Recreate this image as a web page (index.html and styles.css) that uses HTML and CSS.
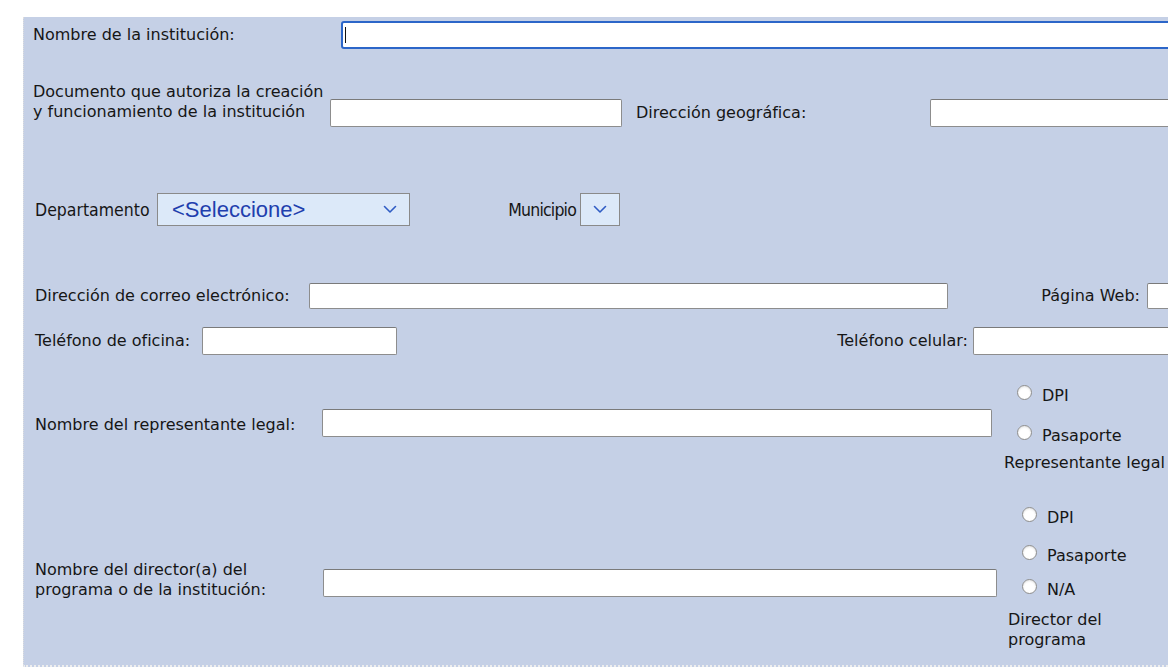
FILE: index.html
```html
<!DOCTYPE html>
<html lang="es">
<head>
<meta charset="utf-8">
<title>Institución</title>
<link rel="stylesheet" href="styles.css">
</head>
<body>
<div class="page">
  <form class="panel">
    <div class="row r1">
      <label class="lbl w308">Nombre de la institución:</label>
      <span class="focus-wrap"><input class="field focused w1000" type="text"></span>
    </div>

    <div class="row r2">
      <label class="lbl two w297">Documento que autoriza la creación<br>y funcionamiento de la institución</label>
      <input class="field w292" type="text">
      <label class="lbl w294 ml14 pb4">Dirección geográfica:</label>
      <input class="field w400" type="text">
    </div>

    <div class="row r3">
      <label class="lbl cond w122 ml2">Departamento</label>
      <span class="sel-wrap">
        <select class="sel w253"><option>&lt;Seleccione&gt;</option></select>
        <svg class="chev" width="14" height="9" viewBox="0 0 14 9"><path d="M1.5 1.5 L7 7 L12.5 1.5" fill="none" stroke="#2f5cc4" stroke-width="1.6" stroke-linecap="round" stroke-linejoin="round"/></svg>
      </span>
      <label class="lbl cond tight right w170">Municipio</label>
      <span class="sel-wrap">
        <select class="sel w40"><option></option></select>
        <svg class="chev" width="14" height="9" viewBox="0 0 14 9"><path d="M1.5 1.5 L7 7 L12.5 1.5" fill="none" stroke="#2f5cc4" stroke-width="1.6" stroke-linecap="round" stroke-linejoin="round"/></svg>
      </span>
    </div>

    <div class="row r4">
      <label class="lbl w274 ml2">Dirección de correo electrónico:</label>
      <input class="field w639 h26" type="text">
      <label class="lbl right w199">Página Web:</label>
      <input class="field w300 h26" type="text">
    </div>

    <div class="row r5">
      <label class="lbl w167 ml2">Teléfono de oficina:</label>
      <input class="field w195" type="text">
      <label class="lbl right w576 pr5">Teléfono celular:</label>
      <input class="field w300" type="text">
    </div>

    <div class="row r6">
      <label class="lbl w287 ml2 mt34">Nombre del representante legal:</label>
      <input class="field w670 mt28" type="text">
      <div class="opts g6">
        <label class="opt"><input type="radio" name="rep" class="radio"><span>DPI</span></label>
        <label class="opt o2"><input type="radio" name="rep" class="radio"><span>Pasaporte</span></label>
        <div class="cap c6">Representante legal</div>
      </div>
    </div>

    <div class="row r7">
      <label class="lbl two w288 ml2 mt56">Nombre del director(a) del<br>programa o de la institución:</label>
      <input class="field w674 mt65" type="text">
      <div class="opts g7">
        <label class="opt"><input type="radio" name="dir" class="radio"><span>DPI</span></label>
        <label class="opt o7b"><input type="radio" name="dir" class="radio"><span>Pasaporte</span></label>
        <label class="opt o7c"><input type="radio" name="dir" class="radio"><span>N/A</span></label>
        <div class="cap c7">Director del<br>programa</div>
      </div>
    </div>
  </form>
</div>
</body>
</html>
```
FILE: styles.css
```css
html, body {
  margin: 0;
  padding: 0;
  background: #ffffff;
  overflow: hidden;
}
.page {
  padding: 17px 0 0 23px;
}
.panel {
  width: 1400px;
  background: #c5d0e6;
  border-left: 1px dotted #dedede;
  border-bottom: 2px dotted #eeeeee;
  padding: 0 0 15px 9px;
  display: flex;
  flex-direction: column;
  font-family: "DejaVu Sans", Verdana, sans-serif;
  font-size: 16px;
  color: #161616;
  box-sizing: border-box;
}
.row {
  display: flex;
  align-items: center;
  flex-shrink: 0;
}
.lbl {
  flex-shrink: 0;
  line-height: 20px;
  white-space: nowrap;
}
.lbl.two { line-height: 20px; }
.lbl.cond { font-family: "DejaVu Sans Condensed", "DejaVu Sans", sans-serif; font-stretch: condensed; font-size: 17.5px; }
.lbl.cond.tight { letter-spacing: -0.8px; }
.right { text-align: right; padding-right: 6px; box-sizing: border-box; }

.field {
  flex-shrink: 0;
  box-sizing: border-box;
  height: 28px;
  margin: 0;
  background: #ffffff;
  border: 1px solid #8d8d8d;
  border-top-color: #7a7a7a;
  border-radius: 2px;
  padding: 0 4px;
  font: inherit;
}
.field.h26 { height: 26px; }
.field.focused {
  border: 2px solid #2c66c9;
  border-radius: 3px;
  outline: none;
}
.focus-wrap {
  position: relative;
  display: inline-flex;
}
.focus-wrap::after {
  content: "";
  position: absolute;
  left: 4px;
  top: 6px;
  width: 1px;
  height: 16px;
  background: #111;
}

.sel-wrap {
  position: relative;
  display: inline-flex;
  flex-shrink: 0;
}
.sel {
  -webkit-appearance: none;
  appearance: none;
  box-sizing: border-box;
  height: 33px;
  margin: 0;
  background: #dce9f9;
  border: 1px solid #8a8a8a;
  border-radius: 0;
  color: #1f3fae;
  font-family: "Liberation Sans", Arial, sans-serif;
  font-size: 22px;
  padding: 0 0 0 14px;
}
.chev {
  position: absolute;
  right: 13px;
  top: 12px;
  pointer-events: none;
}

/* rows */
.r1 { margin-top: 4px; height: 28px; }
.r2 { margin-top: 33px; align-items: flex-end; }
.r3 { margin-top: 66px; height: 33px; }
.r4 { margin-top: 57px; height: 26px; }
.r5 { margin-top: 18px; height: 28px; }
.r6 { margin-top: 26px; align-items: flex-start; }
.r7 { margin-top: 30px; align-items: flex-start; }

.pb4 { padding-bottom: 4px; }
.r2 .lbl.two { padding-bottom: 5px; }
.pr5 { padding-right: 5px; }
.ml2 { margin-left: 2px; }
.ml14 { margin-left: 14px; }
.mt28 { margin-top: 28px; }
.mt34 { margin-top: 34px; }
.mt56 { margin-top: 56px; }
.mt65 { margin-top: 65px; }

.w40 { width: 40px; }
.w122 { width: 122px; }
.w167 { width: 167px; }
.w170 { width: 170px; padding-right: 4px; }
.w195 { width: 195px; }
.w199 { width: 199px; padding-right: 7px; }
.w253 { width: 253px; }
.w274 { width: 274px; }
.w287 { width: 287px; }
.w288 { width: 288px; }
.w292 { width: 292px; }
.w294 { width: 294px; }
.w297 { width: 297px; }
.w300 { width: 300px; }
.w308 { width: 308px; }
.w400 { width: 400px; }
.w576 { width: 576px; }
.w639 { width: 639px; }
.w670 { width: 670px; }
.w674 { width: 674px; }
.w1000 { width: 1000px; }

/* radio groups */
.opts {
  display: flex;
  flex-direction: column;
  flex-shrink: 0;
}
.g6 { margin-left: 12px; }
.g7 { margin-left: 11px; }
.opt {
  display: flex;
  align-items: center;
  height: 22px;
  white-space: nowrap;
}
.g6 .opt { padding-left: 13px; }
.g7 .opt { padding-left: 14px; }
.opt span { margin-left: 10px; }
.radio {
  -webkit-appearance: none;
  appearance: none;
  margin: 0 0 5px 0;
  width: 15px;
  height: 15px;
  box-sizing: border-box;
  border-radius: 50%;
  border: 1px solid #8c8c8c;
  background: #ffffff;
  box-shadow: inset 0 1px 2px rgba(0,0,0,0.12);
  flex-shrink: 0;
}
.g6 .opt:first-child { margin-top: 3px; }
.o2 { margin-top: 18px; }
.cap { white-space: nowrap; line-height: 22px; }
.c6 { margin-top: 6px; }
.g7 .opt:first-child { margin-top: 2px; }
.o7b { margin-top: 16px; }
.o7c { margin-top: 12px; }
.c7 { margin-top: 10px; line-height: 20px; }
```
